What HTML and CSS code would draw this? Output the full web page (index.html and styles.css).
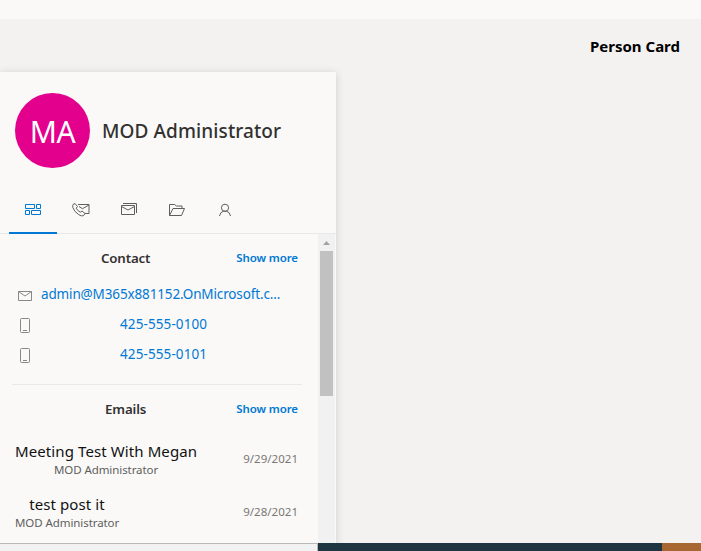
FILE: index.html
```html
<!DOCTYPE html>
<html lang="en">
<head>
<meta charset="utf-8">
<title>Person Card</title>
<link rel="stylesheet" href="styles.css">
</head>
<body>
<div class="topbar"></div>
<main>
  <h1><span>Person Card</span></h1>
  <section class="card">
    <header class="profile">
      <div class="avatar"><span>MA</span></div>
      <div class="name"><span>MOD Administrator</span></div>
    </header>
    <nav class="tabs">
      <div class="tab active"><svg width="18" height="14" viewBox="0 0 18 14"><path d="M1.5 1.5h9v4h-9zM12.5 1.5h4v4h-4zM1.5 7.5h4v4h-4zM7.5 7.5h9v4h-9z"/></svg></div>
      <div class="tab"><svg width="18" height="14" viewBox="0 0 18 14"><path d="M6 1.5h11v9h-4M7 3.5l3.5 2.2L17 2M1 1.500l2-1 2.500 3-1.300 1.700q1.800 3 4.100 4L10 8l3 2.500-1.500 2.200q-2 .8-4.700-1Q2 8.500.8 4.500 .5 2.500 1 1.500z"/></svg></div>
      <div class="tab"><svg width="18" height="14" viewBox="0 0 18 14"><path d="M1.500 2.500h13v9h-13zM1.500 3.500l6.500 3.500 6.500-3.500M3 .500h13.500v9.500"/></svg></div>
      <div class="tab"><svg width="18" height="14" viewBox="0 0 18 14"><path d="M1.500 12.500v-11h5l2 1.500h5.500v2.500M1.500 12.500l3.500-7h11.500l-3 7z"/></svg></div>
      <div class="tab"><svg width="18" height="14" viewBox="0 0 18 14"><circle cx="9" cy="4.800" r="3.600"/><path d="M3.500 13q.8-4.200 4-4.800h3q3.200.6 4 4.800"/></svg></div>
    </nav>
    <div class="body">
      <div class="list">
        <div class="head"><h2><span>Contact</span></h2><a class="more">Show more</a></div>
        <div class="row first"><svg class="ico" width="16" height="16" viewBox="0 0 16 16"><path d="M1.500 4.500h13v9h-13zM1.500 4.500l6.500 4.500 6.500-4.500"/></svg><a class="link mail">admin@M365x881152.OnMicrosoft.c...</a></div>
        <div class="row"><svg class="ico" width="16" height="16" viewBox="0 0 16 16"><rect x="3.500" y="1.500" width="9" height="14" rx="1"/><path d="M6 13.500h4"/></svg><a class="link tel">425-555-0100</a></div>
        <div class="row"><svg class="ico" width="16" height="16" viewBox="0 0 16 16"><rect x="3.500" y="1.500" width="9" height="14" rx="1"/><path d="M6 13.500h4"/></svg><a class="link tel">425-555-0101</a></div>
        <div class="rule"></div>
        <div class="head emails"><h2><span>Emails</span></h2><a class="more">Show more</a></div>
        <div class="email"><div class="text"><div class="subject">Meeting Test With Megan</div><div class="from">MOD Administrator</div></div><div class="date">9/29/2021</div></div>
        <div class="email"><div class="text narrow"><div class="subject">test post it</div><div class="from">MOD Administrator</div></div><div class="date">9/28/2021</div></div>
      </div>
      <div class="scroll"><svg width="17" height="17" viewBox="0 0 17 17"><path d="M5 11l3.500-4 3.500 4z"/></svg><div class="thumb"></div></div>
    </div>
  </section>
</main>
<footer><div class="status"></div><div class="dark"></div><div class="brown"></div></footer>
</body>
</html>
```
FILE: styles.css
```css
* { box-sizing: border-box; }
body { margin: 0; width: 701px; height: 551px; overflow: hidden; display: flex; flex-direction: column; background: #f3f2f1; font-family: "Noto Sans", "Open Sans", sans-serif; color: #323130; white-space: nowrap; }
svg { fill: none; stroke: #605e5c; stroke-width: 1; flex: none; }
.topbar { height: 19px; background: #faf9f8; flex: none; }
main { height: 524px; flex: none; overflow: hidden; }
h1 { margin: 0; height: 53px; padding-right: 21px; text-align: right; font-size: 15px; font-weight: 700; line-height: 55px; color: #000; letter-spacing: 0; }
.card { width: 336px; height: 480px; background: #faf9f8; box-shadow: 0 1px 8px rgba(0,0,0,.15); display: flex; flex-direction: column; }
.profile { display: flex; align-items: center; height: 114px; padding: 3px 0 0 15px; gap: 12px; flex: none; }
.avatar { width: 75px; height: 75px; border-radius: 50%; background: #e3008c; color: #fff; font-size: 30px; line-height: 77px; text-align: center; letter-spacing: -0.5px; }
.name { font-size: 19px; font-weight: 500; line-height: 26px; letter-spacing: 0.1px; }
.tabs { display: flex; height: 48px; padding-left: 9px; border-bottom: 1px solid #e9e8e7; flex: none; }
.tab { width: 48px; height: 48px; display: flex; justify-content: center; padding-top: 17px; }
.active { border-bottom: 2px solid #0078d4; }
.active svg { stroke: #0078d4; }
.body { display: flex; flex: none; }
.list { width: 318px; padding: 0 16px 0 12px; }
.head { display: flex; align-items: center; height: 48px; padding-right: 4px; }
.emails { height: 47px; padding-top: 1px; }
h2 { margin: 0; padding-left: 3px; flex: 1; text-align: center; font-size: 13.3px; font-weight: 600; letter-spacing: -0.15px; }
.more { margin-top: -2px; color: #0078d4; font-size: 11.5px; font-weight: 600; letter-spacing: -0.1px; }
.row { display: flex; height: 30px; padding-left: 5px; }
.first { margin-top: -3px; }
.ico { margin-top: 8px; stroke: #8a8886; }
.link { color: #0078d4; font-size: 13.5px; line-height: 30px; }
.mail { margin-left: 8px; letter-spacing: -0.14px; }
.tel { margin-left: 87px; letter-spacing: 0.1px; }
.rule { height: 1px; margin: 15px 0 0; background: #e9e8e7; }
.email { display: flex; justify-content: space-between; align-items: center; height: 53px; padding: 0 4px 0 3px; }
.text { width: 182px; padding-top: 2px; text-align: center; }
.narrow { width: 104px; }
.subject { font-size: 15px; line-height: 20px; color: #111; letter-spacing: 0.1px; }
.from { font-size: 11.5px; line-height: 17px; color: #605e5c; letter-spacing: -0.08px; }
.date { font-size: 11.5px; line-height: 16px; color: #797775; letter-spacing: 0.02px; }
.scroll { width: 17px; height: 320px; background: #f1f1f1; }
.scroll svg { display: block; fill: #a3a3a3; stroke: none; }
.thumb { width: 13px; height: 145px; margin-left: 2px; background: #c1c1c1; }
footer { display: flex; height: 8px; flex: none; }
.status { width: 318px; background: #f2f2f2; border-top: 1px solid #b9b9b9; border-right: 1px solid #b9b9b9; }
.dark { flex: 1; background: #1f3541; }
.brown { width: 39px; background: #a86731; }
```
